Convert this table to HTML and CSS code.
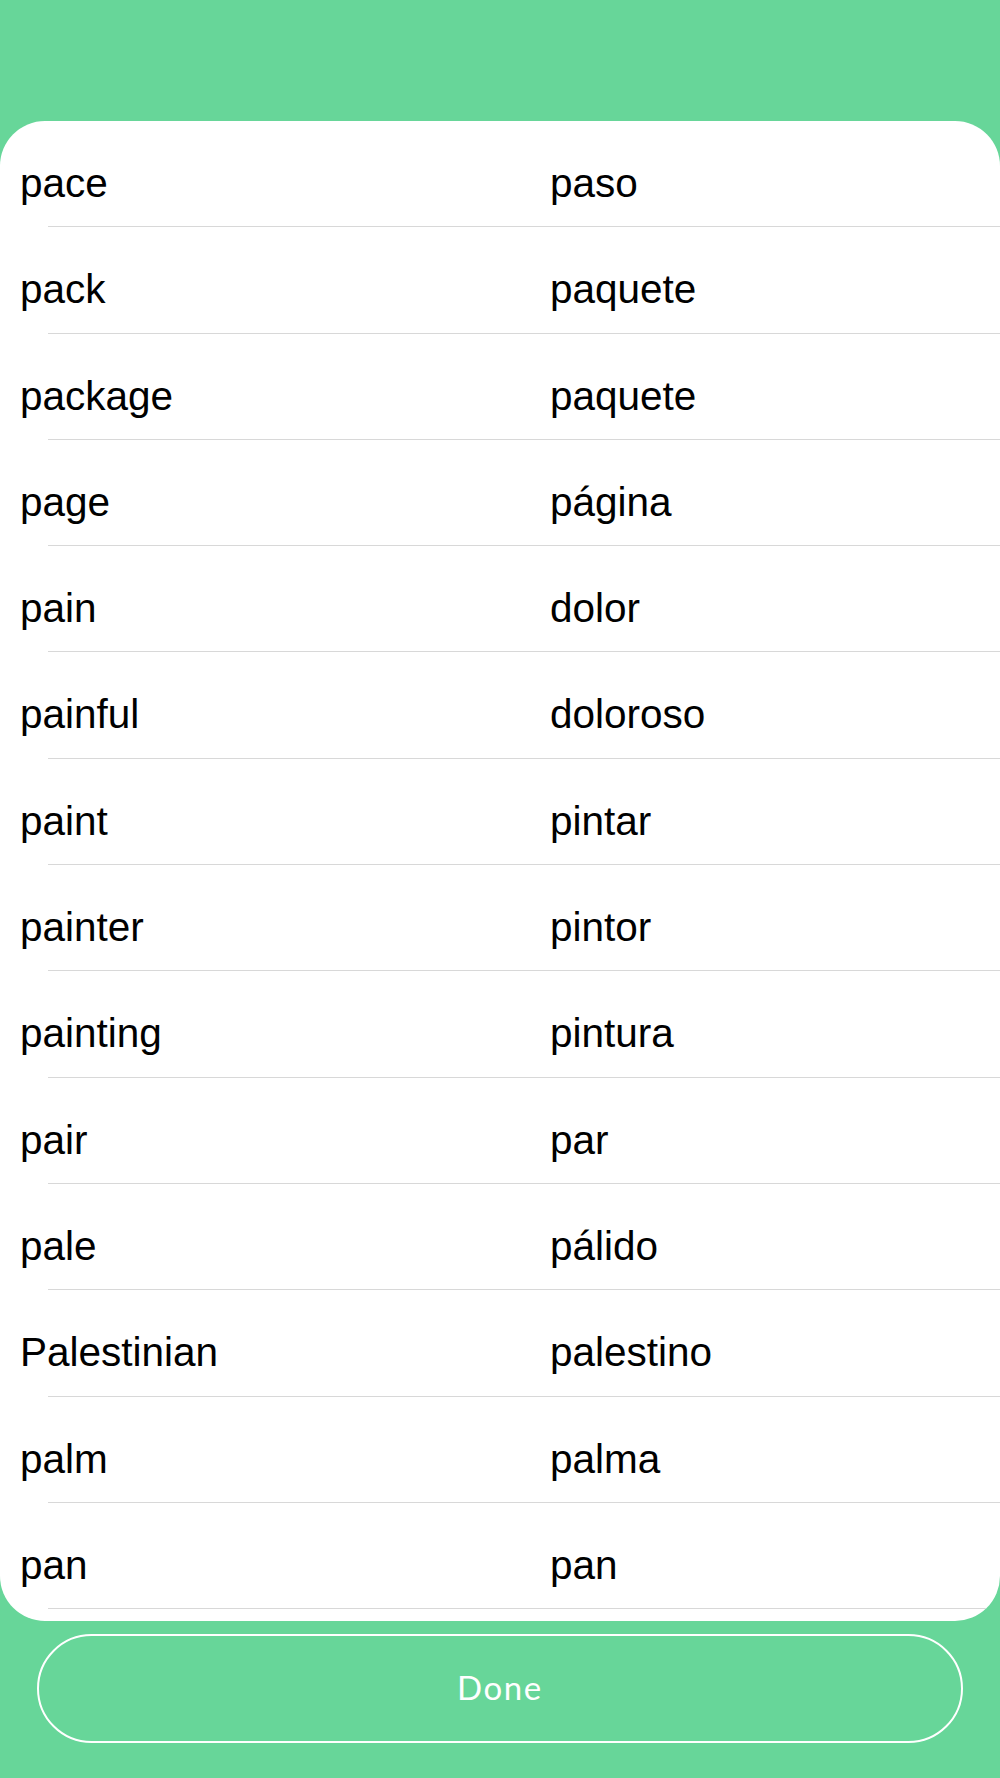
FILE: index.html
```html
<!DOCTYPE html>
<html lang="en">
<head>
<meta charset="utf-8">
<title>Word list</title>
<link rel="stylesheet" href="styles.css">
</head>
<body>
<div class="screen">
  <div class="card">
    <div class="row"><span class="en">pace</span><span class="es">paso</span></div>
    <div class="row"><span class="en">pack</span><span class="es">paquete</span></div>
    <div class="row"><span class="en">package</span><span class="es">paquete</span></div>
    <div class="row"><span class="en">page</span><span class="es">página</span></div>
    <div class="row"><span class="en">pain</span><span class="es">dolor</span></div>
    <div class="row"><span class="en">painful</span><span class="es">doloroso</span></div>
    <div class="row"><span class="en">paint</span><span class="es">pintar</span></div>
    <div class="row"><span class="en">painter</span><span class="es">pintor</span></div>
    <div class="row"><span class="en">painting</span><span class="es">pintura</span></div>
    <div class="row"><span class="en">pair</span><span class="es">par</span></div>
    <div class="row"><span class="en">pale</span><span class="es">pálido</span></div>
    <div class="row"><span class="en">Palestinian</span><span class="es">palestino</span></div>
    <div class="row"><span class="en">palm</span><span class="es">palma</span></div>
    <div class="row"><span class="en">pan</span><span class="es">pan</span></div>
  </div>
  <button class="done" type="button">Done</button>
</div>
</body>
</html>
```

FILE: styles.css
```css
html, body {
  margin: 0;
  padding: 0;
}

body {
  background: #67d699;
  width: 1000px;
  height: 1778px;
  overflow: hidden;
}

.screen {
  display: flex;
  flex-direction: column;
  padding-top: 121px;
}

.card {
  background: #ffffff;
  border-radius: 45px;
  height: 1500px;
  overflow: hidden;
}

.row {
  box-sizing: border-box;
  height: 106.3px;
  padding: 39px 0 0 20px;
  display: grid;
  grid-template-columns: 530px 1fr;
  align-items: start;
  font-family: "Liberation Sans", Arial, sans-serif;
  font-size: 40.5px;
  line-height: 46px;
  color: #000000;
  background: linear-gradient(#d8d8d8, #d8d8d8) no-repeat 48px 100% / calc(100% - 48px) 1px;
}

.done {
  margin: 13px 37px 0;
  height: 109px;
  box-sizing: border-box;
  border: 2px solid #ffffff;
  border-radius: 55px;
  background: transparent;
  color: #ffffff;
  font-family: "Lato", "Liberation Sans", sans-serif;
  font-size: 33px;
  letter-spacing: 1.6px;
  padding: 0 0 4px;
}
```
